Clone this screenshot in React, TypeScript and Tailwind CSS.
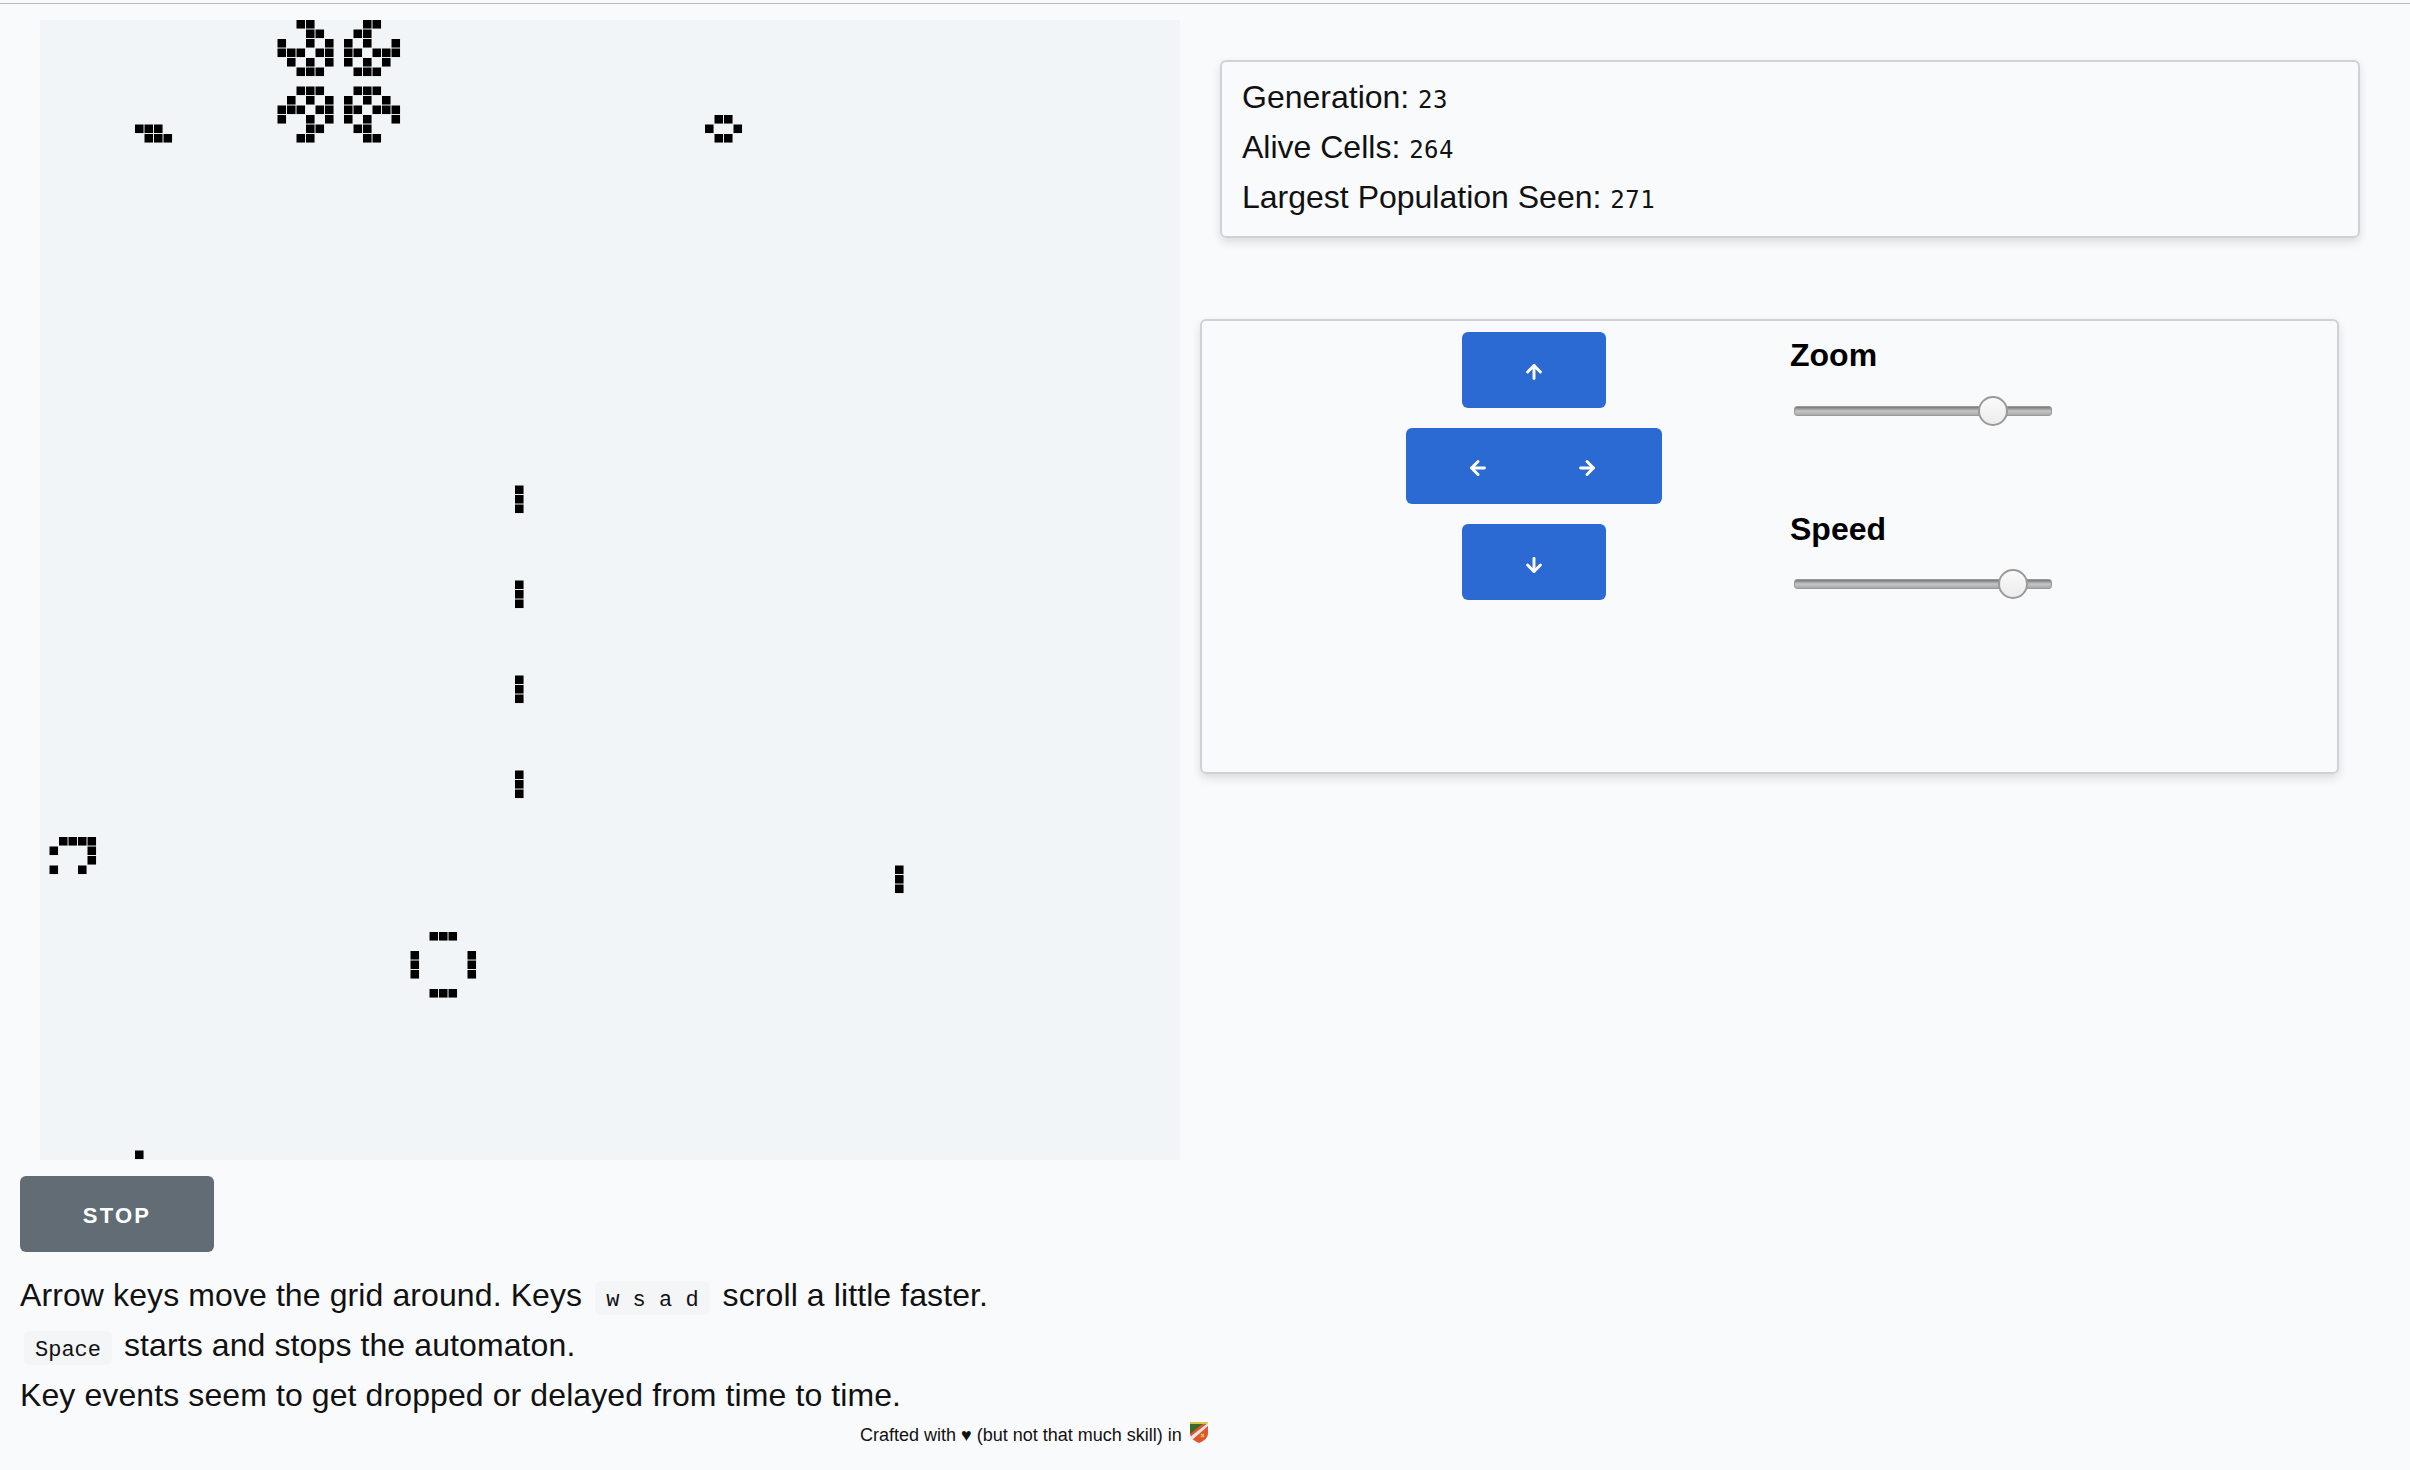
import React from "react";
import { ArrowDown, ArrowLeft, ArrowRight, ArrowUp } from "lucide-react";

// [row, columns alive in that row]
const liveRows: [number, number[]][] = [
  [0, [27, 28, 34, 35]],
  [1, [28, 29, 33, 34]],
  [2, [25, 28, 30, 32, 34, 37]],
  [3, [25, 26, 27, 29, 30, 32, 33, 35, 36, 37]],
  [4, [26, 28, 30, 32, 34, 36]],
  [5, [27, 28, 29, 33, 34, 35]],
  [7, [27, 28, 29, 33, 34, 35]],
  [8, [26, 28, 30, 32, 34, 36]],
  [9, [25, 26, 27, 29, 30, 32, 33, 35, 36, 37]],
  [10, [25, 28, 30, 32, 34, 37, 71, 72]],
  [11, [28, 29, 33, 34, 10, 11, 12, 70, 73]],
  [12, [27, 28, 34, 35, 11, 12, 13, 71, 72]],
  [49, [50]],
  [50, [50]],
  [51, [50]],
  [59, [50]],
  [60, [50]],
  [61, [50]],
  [69, [50]],
  [70, [50]],
  [71, [50]],
  [79, [50]],
  [80, [50]],
  [81, [50]],
  [86, [2, 3, 4, 5]],
  [87, [1, 5]],
  [88, [5]],
  [89, [1, 4, 90]],
  [90, [90]],
  [91, [90]],
  [96, [41, 42, 43]],
  [98, [39, 45]],
  [99, [39, 45]],
  [100, [39, 45]],
  [102, [41, 42, 43]],
  [119, [10]],
];

const Grid = () => (
  <svg width="1140" height="1140" viewBox="0 0 1140 1140" className="block bg-[#f1f5f8]">
    {liveRows.map(([row, cols]) =>
      cols.map((col) => (
        <rect key={`${row}-${col}`} x={col * 9.5} y={row * 9.5} width="8.55" height="8.55" fill="#000" />
      ))
    )}
  </svg>
);

const Slider = ({ thumb }: { thumb: number }) => (
  <div className="relative ml-[4px] h-[10px] w-[258px] rounded-[3px] border border-[#999] bg-gradient-to-b from-[#777] via-[#c6c6c6] to-[#a9a9a9]">
    <div
      className="absolute top-[-11px] h-[30px] w-[30px] rounded-full border-2 border-[#9a9a9a] bg-gradient-to-b from-[#fafafa] to-[#ececec]"
      style={{ left: thumb }}
    />
  </div>
);

const Key = ({ children, className }: { children: React.ReactNode; className?: string }) => (
  <code className={`inline-block h-[34px] rounded-[6px] bg-[#f4f5f6] px-[11px] align-middle font-['Liberation_Mono',monospace] text-[22px] leading-[39px] tracking-normal text-[#111] ${className ?? ""}`}>
    {children}
  </code>
);

const Stat = ({ label, value }: { label: string; value: number }) => (
  <div className="h-[50px] leading-[50px]">
    {label}{" "}
    <span className="font-['DejaVu_Sans_Mono',monospace] text-[24px] tracking-[0.5px]">{value}</span>
  </div>
);

const dpadButton = "flex items-center bg-[#2c6ad3] text-white h-[76px]";

export default function App() {
  return (
    <div className="min-h-screen bg-[#f9fafc] font-['Liberation_Sans',sans-serif] text-[32px] text-[#111]">
      <div className="pt-[3px]">
        <div className="h-[1px] bg-[#bbbbbb]" />
      </div>
      <div className="flex">
        <div className="w-[1200px] shrink-0 pt-[16px]">
          <div className="ml-[40px]">
            <Grid />
          </div>
          <button className="ml-[20px] mt-[16px] block h-[76px] w-[194px] rounded-[6px] bg-[#616c75] pt-[3px] text-[22px] font-bold tracking-[2.2px] text-white">
            STOP
          </button>
          <div className="ml-[20px] mt-[18px] whitespace-nowrap tracking-[0.1px]">
            <div className="h-[50px] leading-[50px]">
              Arrow keys move the grid around. Keys <Key className="mx-[4px]">w s a d</Key> scroll a little faster.
            </div>
            <div className="h-[50px] leading-[50px]">
              <Key className="ml-[4px] mr-[3px]">Space</Key> starts and stops the automaton.
            </div>
            <div className="h-[50px] leading-[50px]">Key events seem to get dropped or delayed from time to time.</div>
          </div>
          <div className="flex h-[30px] items-center whitespace-nowrap pl-[860px] text-[18px] leading-[28px]">
            Crafted with ♥ (but not that much skill) in
            <svg width="18" height="21" viewBox="0 0 18 21" className="ml-[8px] mt-[-6px] shrink-0">
              <path d="M0 0h18v11c0 5-4 8-9 10-5-2-9-5-9-10z" fill="#e2562d" />
              <path d="M0 0h15L0 12z" fill="#3d6b2a" />
              <path d="M0 0h18v2H0z" fill="#d8c54a" />
              <path d="M18 1v3L2 18l-2-3z" fill="#e6e6e6" />
              <path d="M11 12l3 3m0-3l-3 3" stroke="#e8c94a" strokeWidth="1.2" />
            </svg>
          </div>
        </div>

        <div className="w-[1160px] shrink-0">
          <div className="ml-[20px] mt-[56px] h-[178px] w-[1140px] rounded-[6px] border-2 border-[#cfd1d4] px-[20px] pt-[10px] shadow-[0_4px_10px_rgba(0,0,0,0.12)]">
            <Stat label="Generation:" value={23} />
            <Stat label="Alive Cells:" value={264} />
            <Stat label="Largest Population Seen:" value={271} />
          </div>

          <div className="mt-[81px] flex h-[455px] w-[1139px] rounded-[6px] border-2 border-[#cfd1d4] pl-[204px] pt-[11px] shadow-[0_4px_10px_rgba(0,0,0,0.12)]">
            <div className="flex w-[256px] shrink-0 flex-col items-center gap-[20px]">
              <button className={`${dpadButton} w-[144px] justify-center rounded-[6px] pt-[4px]`}>
                <ArrowUp size={22} strokeWidth={3.2} />
              </button>
              <div className="flex w-[256px]">
                <button className={`${dpadButton} w-[128px] justify-start rounded-l-[6px] pl-[61px] pt-[4px]`}>
                  <ArrowLeft size={22} strokeWidth={3.2} />
                </button>
                <button className={`${dpadButton} w-[128px] justify-end rounded-r-[6px] pr-[64px] pt-[4px]`}>
                  <ArrowRight size={22} strokeWidth={3.2} />
                </button>
              </div>
              <button className={`${dpadButton} w-[144px] justify-center rounded-[6px] pt-[6px]`}>
                <ArrowDown size={22} strokeWidth={3.2} />
              </button>
            </div>
            <div className="ml-[128px] flex flex-col">
              <div className="mt-[-2px] h-[50px] text-[32px] font-bold leading-[50px] text-black">Zoom</div>
              <div className="mt-[26px]">
                <Slider thumb={183} />
              </div>
              <div className="mt-[88px] h-[50px] text-[32px] font-bold leading-[50px] text-black">Speed</div>
              <div className="mt-[25px]">
                <Slider thumb={203} />
              </div>
            </div>
          </div>
        </div>
      </div>
    </div>
  );
}
